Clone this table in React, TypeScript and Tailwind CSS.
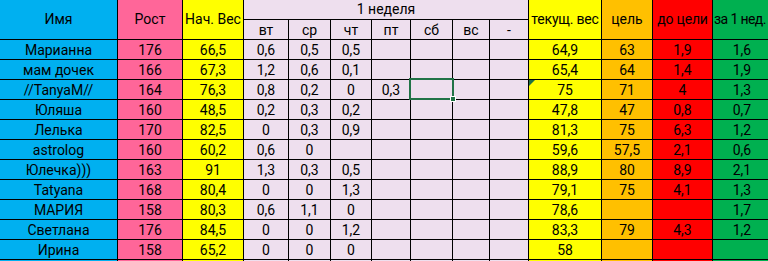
import React from "react";

type Row = {
  name: string;
  h: string;
  start: string;
  week: string[];
  cur: string;
  goal: string;
  left: string;
  wk: string;
};

const rows: Row[] = [
  { name: "Марианна", h: "176", start: "66,5", week: ["0,6", "0,5", "0,5", "", "", "", ""], cur: "64,9", goal: "63", left: "1,9", wk: "1,6" },
  { name: "мам дочек", h: "166", start: "67,3", week: ["1,2", "0,6", "0,1", "", "", "", ""], cur: "65,4", goal: "64", left: "1,4", wk: "1,9" },
  { name: "//TanyaM//", h: "164", start: "76,3", week: ["0,8", "0,2", "0", "0,3", "", "", ""], cur: "75", goal: "71", left: "4", wk: "1,3" },
  { name: "Юляша", h: "160", start: "48,5", week: ["0,2", "0,3", "0,2", "", "", "", ""], cur: "47,8", goal: "47", left: "0,8", wk: "0,7" },
  { name: "Лелька", h: "170", start: "82,5", week: ["0", "0,3", "0,9", "", "", "", ""], cur: "81,3", goal: "75", left: "6,3", wk: "1,2" },
  { name: "astrolog", h: "160", start: "60,2", week: ["0,6", "0", "", "", "", "", ""], cur: "59,6", goal: "57,5", left: "2,1", wk: "0,6" },
  { name: "Юлечка)))", h: "163", start: "91", week: ["1,3", "0,3", "0,5", "", "", "", ""], cur: "88,9", goal: "80", left: "8,9", wk: "2,1" },
  { name: "Tatyana", h: "168", start: "80,4", week: ["0", "0", "1,3", "", "", "", ""], cur: "79,1", goal: "75", left: "4,1", wk: "1,3" },
  { name: "МАРИЯ", h: "158", start: "80,3", week: ["0,6", "1,1", "0", "", "", "", ""], cur: "78,6", goal: "", left: "", wk: "1,7" },
  { name: "Светлана", h: "176", start: "84,5", week: ["0", "0", "1,2", "", "", "", ""], cur: "83,3", goal: "79", left: "4,3", wk: "1,2" },
  { name: "Ирина", h: "158", start: "65,2", week: ["0", "0", "0", "", "", "", ""], cur: "58", goal: "", left: "", wk: "" },
];

const cell = "border-r border-b border-black flex items-center justify-center h-[20px] leading-none whitespace-nowrap overflow-hidden";
const BLUE = "bg-[#00b0f0]";
const PINK = "bg-[#ff6699]";
const YEL = "bg-[#ffff00]";
const LAV = "bg-[#eedfee]";
const ORA = "bg-[#ffc000]";
const RED = "bg-[#ff0000]";
const GRN = "bg-[#00b050]";

export default function App() {
  return (
    <div className="w-[768px] h-[261px] overflow-hidden bg-white text-black text-[14px]" style={{ fontFamily: "Roboto, 'Liberation Sans', sans-serif" }}>
      <div className="grid w-[772px] grid-cols-[118px_65px_61px_45px_42px_41px_39px_42px_37px_39px_73px_51px_60px_59px]">
        {/* header */}
        <div className={`${BLUE} row-span-2 border-r border-b border-black flex items-center justify-center h-[40px]`}>Имя</div>
        <div className={`${PINK} row-span-2 border-r border-b border-black flex items-center justify-center h-[40px]`}>Рост</div>
        <div className={`${YEL} row-span-2 border-r border-b border-black flex items-center justify-center h-[40px]`}>Нач. Вес</div>
        <div className={`${LAV} col-span-7 border-r border-b border-black flex items-center justify-center h-[20px]`}>1 неделя</div>
        <div className={`${YEL} row-span-2 border-r border-b border-black flex items-center justify-center h-[40px] whitespace-nowrap tracking-[-0.2px]`}>текущ. вес</div>
        <div className={`${ORA} row-span-2 border-r border-b border-black flex items-center justify-center h-[40px]`}>цель</div>
        <div className={`${RED} row-span-2 border-r border-b border-black flex items-center justify-center h-[40px] whitespace-nowrap tracking-[-0.2px]`}>до цели</div>
        <div className={`${GRN} row-span-2 border-r border-b border-black flex items-center justify-start pl-[1px] h-[40px] whitespace-nowrap tracking-[-0.6px]`}>за 1 нед.</div>
        {["вт", "ср", "чт", "пт", "сб", "вс", "-"].map((d) => (
          <div key={d} className={`${LAV} ${cell}`}>{d}</div>
        ))}

        {rows.map((r, i) => (
          <React.Fragment key={i}>
            <div className={`${BLUE} ${cell}`}>{r.name}</div>
            <div className={`${PINK} ${cell}`}>{r.h}</div>
            <div className={`${YEL} ${cell}`}>{r.start}</div>
            {r.week.map((w, j) => (
              <div key={j} className={`${LAV} ${cell} relative overflow-visible ${i === 2 && j === 4 ? "z-10" : ""}`}>
                {w}
                {i === 2 && j === 4 && (
                  <>
                    <div className="absolute left-[-2px] top-[-2px] w-[45px] h-[22px] border-2 border-[#217346]" />
                    <div className="absolute right-[-4px] bottom-[-3px] w-[6px] h-[6px] bg-[#217346] border border-white" />
                  </>
                )}
              </div>
            ))}
            <div className={`${YEL} ${cell} relative`}>
              {i === 2 && (
                <svg className="absolute left-0 top-0" width="6" height="6" viewBox="0 0 6 6">
                  <polygon points="0,0 6,0 0,6" fill="#1e7145" />
                </svg>
              )}
              {r.cur}
            </div>
            <div className={`${ORA} ${cell}`}>{r.goal}</div>
            <div className={`${RED} ${cell}`}>{r.left}</div>
            <div className={`${GRN} ${cell}`}>{r.wk}</div>
          </React.Fragment>
        ))}

        {/* partially visible next row */}
        <div className={`${BLUE} ${cell}`}></div>
        <div className={`${PINK} ${cell}`}></div>
        <div className={`${YEL} ${cell}`}></div>
        {[0, 1, 2, 3, 4, 5, 6].map((j) => (
          <div key={j} className={`${LAV} ${cell}`}></div>
        ))}
        <div className={`${YEL} ${cell}`}></div>
        <div className={`${ORA} ${cell}`}></div>
        <div className={`${RED} ${cell}`}></div>
        <div className={`${GRN} ${cell}`}></div>
      </div>
    </div>
  );
}
